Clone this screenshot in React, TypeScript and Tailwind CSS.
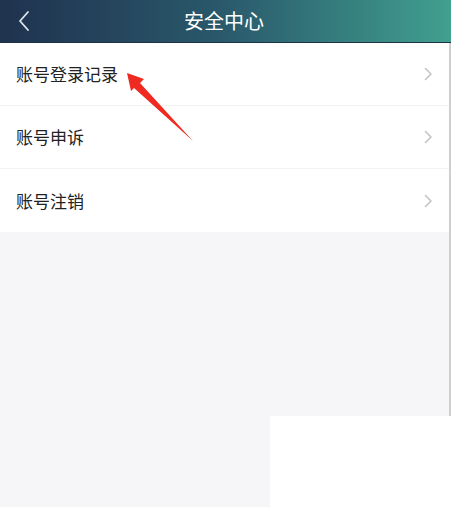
import React from "react";

const font = { fontFamily: '"Noto Sans CJK SC", "Noto Sans", sans-serif' };

function Chevron() {
  return (
    <svg width="9" height="14" viewBox="0 0 9 14" fill="none">
      <path d="M1.5 1.5 L7 7 L1.5 12.5" stroke="#c4c4c4" strokeWidth="1.6" strokeLinecap="round" strokeLinejoin="round" />
    </svg>
  );
}

function Row({ label, last }: { label: string; last?: boolean }) {
  return (
    <div className={`flex h-[63px] items-center justify-between pl-[16px] pr-[16px] ${last ? "" : "border-b border-[#f3f3f3]"}`}>
      <span className="text-[17px] text-[#222]">{label}</span>
      <Chevron />
    </div>
  );
}

export default function App() {
  return (
    <div className="relative h-[507px] w-[451px] overflow-hidden bg-[#f6f6f8]" style={font}>
      <div className="relative flex h-[43px] items-center justify-center border-b border-[#1d3448] bg-gradient-to-r from-[#1f324e] via-[#2a5a6c] to-[#41a08f]">
        <svg className="absolute left-[17px] top-[10px]" width="14" height="22" viewBox="0 0 14 22" fill="none">
          <path d="M11 2 L3 11 L11 20" stroke="#dfe6ee" strokeWidth="1.8" strokeLinecap="round" strokeLinejoin="round" />
        </svg>
        <span className="pr-[3px] text-[20px] text-white">安全中心</span>
      </div>
      <div className="flex border-r-2 border-[#cfcfcf]">
        <div className="flex-1">
          <div className="bg-white">
            <Row label="账号登录记录" />
            <Row label="账号申诉" />
            <Row label="账号注销" last />
          </div>
          <div className="h-[184px]" />
        </div>
      </div>
      <div className="ml-[270px] h-[91px] bg-white" />
      <svg className="absolute left-0 top-0" width="451" height="507" viewBox="0 0 451 507">
        <polygon points="127,73 144,79 140,83 193,141 134,88 131,91" fill="#ef2a21" />
      </svg>
    </div>
  );
}
